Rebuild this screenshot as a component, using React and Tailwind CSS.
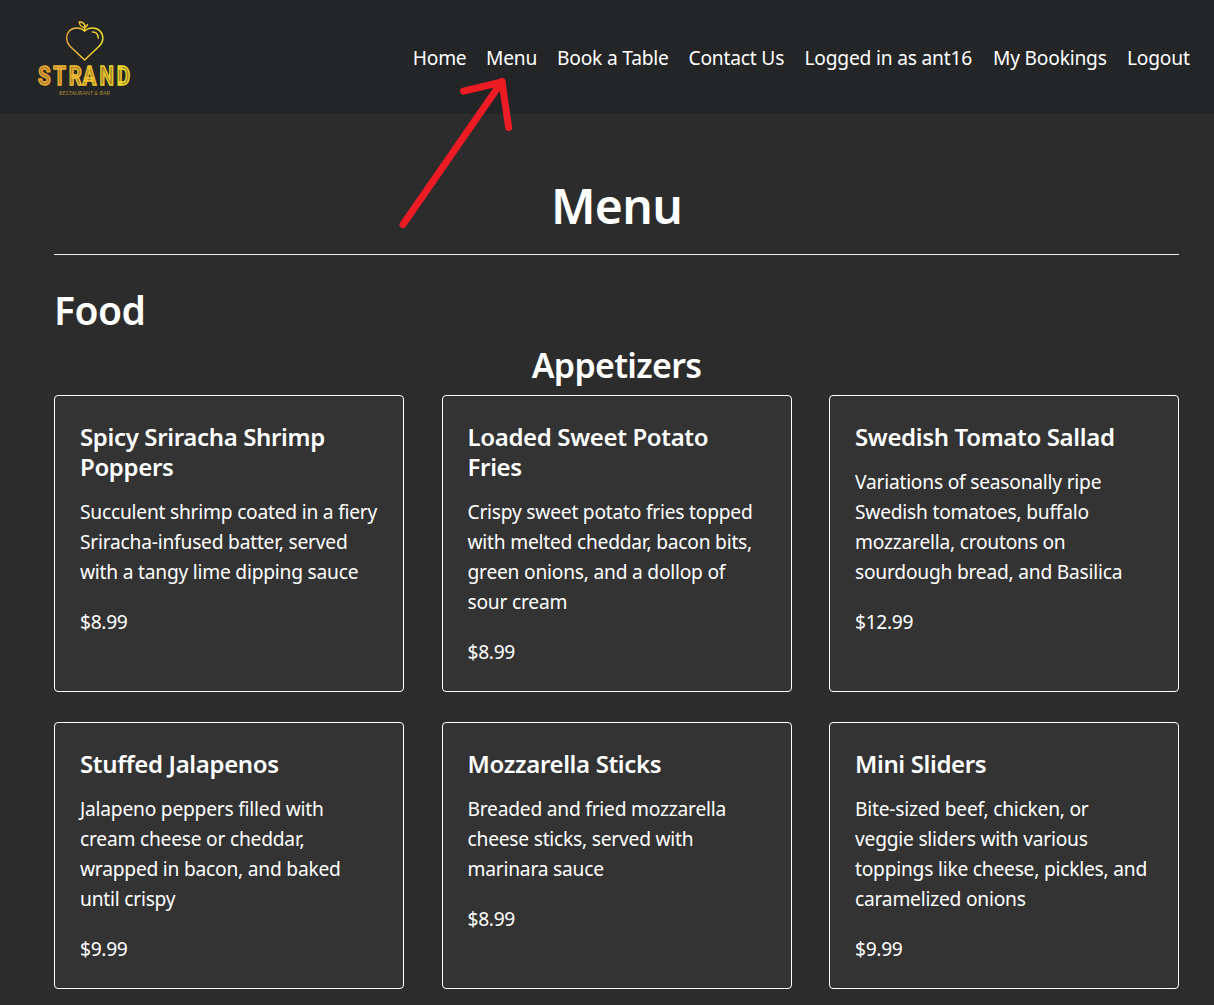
const NAV = [
  ['Home', 'w-[53.3px]'],
  ['Menu', 'w-[51px]'],
  ['Book a Table', 'w-[111.5px]'],
  ['Contact Us', 'w-[96px]'],
  ['Logged in as ant16', 'w-[168.500px]'],
  ['My Bookings', 'w-[114px]'],
  ['Logout', 'w-[63px]'],
];

const APPETIZERS = [
  {
    title: ['Spicy Sriracha Shrimp', 'Poppers'],
    text: ['Succulent shrimp coated in a fiery', 'Sriracha-infused batter, served', 'with a tangy lime dipping sauce'],
    price: '$8.99',
  },
  {
    title: ['Loaded Sweet Potato', 'Fries'],
    text: ['Crispy sweet potato fries topped', 'with melted cheddar, bacon bits,', 'green onions, and a dollop of', 'sour cream'],
    price: '$8.99',
  },
  {
    title: ['Swedish Tomato Sallad'],
    text: ['Variations of seasonally ripe', 'Swedish tomatoes, buffalo', 'mozzarella, croutons on', 'sourdough bread, and Basilica'],
    price: '$12.99',
  },
  {
    title: ['Stuffed Jalapenos'],
    text: ['Jalapeno peppers filled with', 'cream cheese or cheddar,', 'wrapped in bacon, and baked', 'until crispy'],
    price: '$9.99',
  },
  {
    title: ['Mozzarella Sticks'],
    text: ['Breaded and fried mozzarella', 'cheese sticks, served with', 'marinara sauce'],
    price: '$8.99',
  },
  {
    title: ['Mini Sliders'],
    text: ['Bite-sized beef, chicken, or', 'veggie sliders with various', 'toppings like cheese, pickles, and', 'caramelized onions'],
    price: '$9.99',
  },
];

function Logo() {
  return (
    <svg width="100" height="84" viewBox="35 16 100 84" fill="none" aria-label="Strand Restaurant & Bar">
      <defs>
        <linearGradient id="heartGold" gradientUnits="userSpaceOnUse" x1="65" y1="0" x2="104" y2="0">
          <stop offset="0" stopColor="#e6a238" />
          <stop offset="0.5" stopColor="#f0c832" />
          <stop offset="1" stopColor="#e6df2c" />
        </linearGradient>
        <linearGradient id="wordGold" gradientUnits="userSpaceOnUse" x1="47.500" y1="0" x2="165" y2="0">
          <stop offset="0" stopColor="#eda33a" />
          <stop offset="0.5" stopColor="#f0c230" />
          <stop offset="1" stopColor="#e6e32b" />
        </linearGradient>
      </defs>
      <g stroke="url(#heartGold)" strokeWidth="1.5" strokeLinecap="round" strokeLinejoin="round">
        <path d="M84.6 31C81 27.300 73.500 26.600 69.200 31C65.500 35.500 65.800 41.500 69.800 46L84.600 60L99.400 46C103.800 41.500 104 35.500 100 31C95.700 26.600 88.200 27.300 84.600 31Z" />
        <path d="M84.600 31V28.500L87.500 24.800" />
        <path d="M85 27.500C81.500 27.500 79.300 25 79.300 21.700C82.800 21.900 85.300 24 85 27.500Z" />
        <path d="M92.500 32C96 31.800 98.300 34.500 98.300 38" />
      </g>
      <text
        transform="scale(.8 1)"
        x="47.600 66.700 86 103 124.500 145.800"
        y="85.300"
        fontFamily="Roboto, sans-serif"
        fontSize="25.500"
        fontWeight="700"
        fill="#a98429"
        stroke="url(#wordGold)"
        strokeWidth="1.500"
      >
        STRAND
      </text>
      <text x="59" y="95" textLength="51" lengthAdjust="spacingAndGlyphs" fontFamily="Lato, sans-serif" fontStyle="italic" fontSize="6.500" fill="#a58a3a">RESTAURANT &amp; BAR</text>
    </svg>
  );
}

function Card({ item }) {
  return (
    <article className="rounded-[4px] border border-white bg-[#333333] px-[25px] pt-[26px] pb-[24px]">
      <h4 className="mb-[15px] text-[24px] leading-[30px] font-semibold tracking-[-0.35px] whitespace-nowrap">
        {item.title.map((line) => <span key={line} className="block">{line}</span>)}
      </h4>
      <p className="mb-5 text-[19.2px] leading-[30px] tracking-[-0.22px] whitespace-nowrap">
        {item.text.map((line) => <span key={line} className="block">{line}</span>)}
      </p>
      <p className="text-[19.2px] leading-[30px] tracking-[-0.3px]">{item.price}</p>
    </article>
  );
}

function Arrow() {
  return (
    <svg className="pointer-events-none absolute top-[70px] left-[390px]" width="140" height="170" viewBox="390 70 140 170" fill="none" stroke="#ed1c24" strokeWidth="7" strokeLinecap="round" strokeLinejoin="round">
      <path d="M403 224.500L502 81.500" />
      <path d="M463.500 91.200L502 82L508.700 127.500" />
    </svg>
  );
}

export default function App() {
  return (
    <div className="relative h-[1005px] overflow-hidden bg-[#2c2c2c] font-['Noto_Sans','Open_Sans',sans-serif] text-white">
      <header className="flex h-[114px] items-start justify-between bg-[#232526] pt-4 pr-[24px] pl-[35px]">
        <Logo />
        <nav className="mt-[27px] flex gap-5 text-[19.2px] leading-[30px] tracking-[-0.2px] whitespace-nowrap">
          {NAV.map(([label, width]) => <a key={label} className={width}>{label}</a>)}
        </nav>
      </header>
      <main className="pr-[35px] pl-[54px]">
        <h1 className="border-b border-[#efefef] pt-[62px] pb-[18px] text-center text-[48px] leading-[60px] font-semibold tracking-[-0.7px]">Menu</h1>
        <h2 className="mt-[31px] text-[39px] leading-[48px] font-semibold tracking-[-0.5px]">Food</h2>
        <h3 className="mt-[10px] text-center text-[34px] leading-[42px] font-semibold tracking-[-0.7px]">Appetizers</h3>
        <section className="mt-[9px] grid grid-cols-[350px_350px_350px] justify-between gap-y-[30px]">
          {APPETIZERS.map((item) => <Card key={item.title[0]} item={item} />)}
        </section>
      </main>
      <Arrow />
    </div>
  );
}
